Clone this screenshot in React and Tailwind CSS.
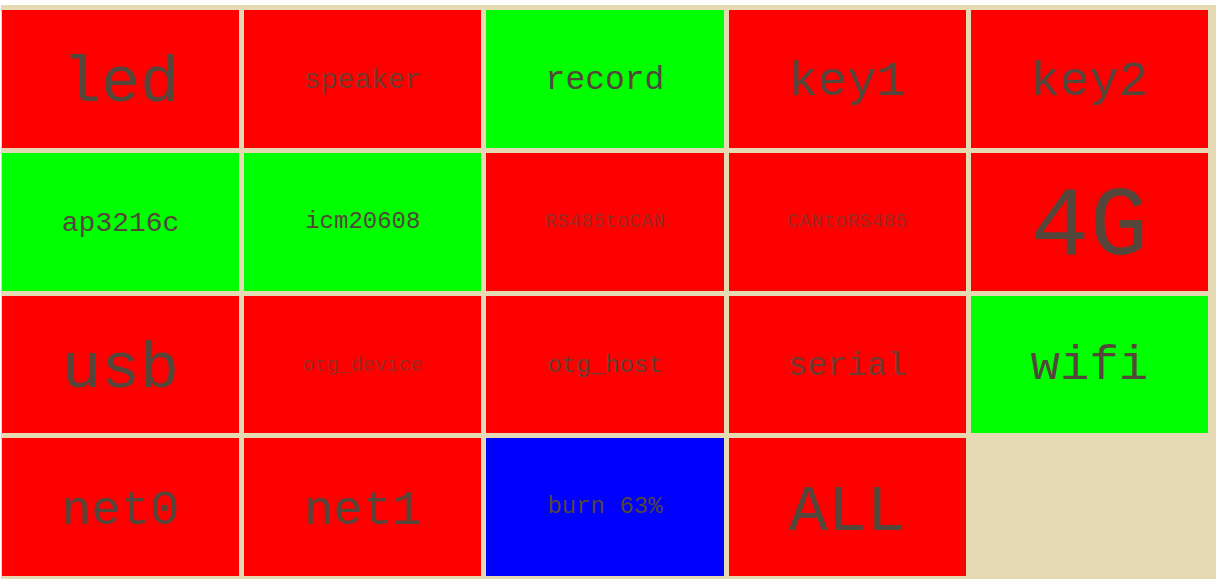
const tiles = [
  { label: "led", color: "bg-[#ff0000]", text: "text-[65px] pt-3" },
  { label: "speaker", color: "bg-[#ff0000]", text: "text-[28px] pt-1 opacity-80" },
  { label: "record", color: "bg-[#00ff00]", text: "text-[33px] pt-1" },
  { label: "key1", color: "bg-[#ff0000]", text: "text-[49px] pt-2" },
  { label: "key2", color: "bg-[#ff0000]", text: "text-[49px] pt-2" },
  { label: "ap3216c", color: "bg-[#00ff00]", text: "text-[28px] pt-1" },
  { label: "icm20608", color: "bg-[#00ff00]", text: "text-[24px]" },
  { label: "RS485toCAN", color: "bg-[#ff0000]", text: "text-[20px] opacity-60" },
  { label: "CANtoRS485", color: "bg-[#ff0000]", text: "text-[20px] opacity-60" },
  { label: "4G", color: "bg-[#ff0000]", text: "text-[98px] pt-3" },
  { label: "usb", color: "bg-[#ff0000]", text: "text-[65px] pt-3" },
  { label: "otg_device", color: "bg-[#ff0000]", text: "text-[20px] pt-1 opacity-60" },
  { label: "otg_host", color: "bg-[#ff0000]", text: "text-[24px] pt-1 opacity-90" },
  { label: "serial", color: "bg-[#ff0000]", text: "text-[33px] pt-1 opacity-80" },
  { label: "wifi", color: "bg-[#00ff00]", text: "text-[49px] pt-1" },
  { label: "net0", color: "bg-[#ff0000]", text: "text-[49px] pt-2" },
  { label: "net1", color: "bg-[#ff0000]", text: "text-[49px] pt-2" },
  { label: "burn 63%", color: "bg-[#0000ff]", text: "text-[24px]" },
  { label: "ALL", color: "bg-[#ff0000]", text: "text-[65px] pt-3" },
];

function Tile({ label, color, text }) {
  return (
    <button
      type="button"
      className={`flex min-w-0 items-center justify-center whitespace-pre ${color}`}
    >
      <span className={`leading-none text-[#54463a] ${text}`}>{label}</span>
    </button>
  );
}

export default function App() {
  return (
    <div className="flex min-h-screen flex-col bg-white pt-[5px] pr-[7px] pb-[6px] pl-px font-['Liberation_Mono',monospace]">
      <main className="grid flex-1 grid-cols-5 grid-rows-4 gap-[5px] bg-[#e6dab4] pt-[5px] pr-[8px] pb-[3px] pl-px">
        {tiles.map((tile) => (
          <Tile key={tile.label} {...tile} />
        ))}
      </main>
    </div>
  );
}
